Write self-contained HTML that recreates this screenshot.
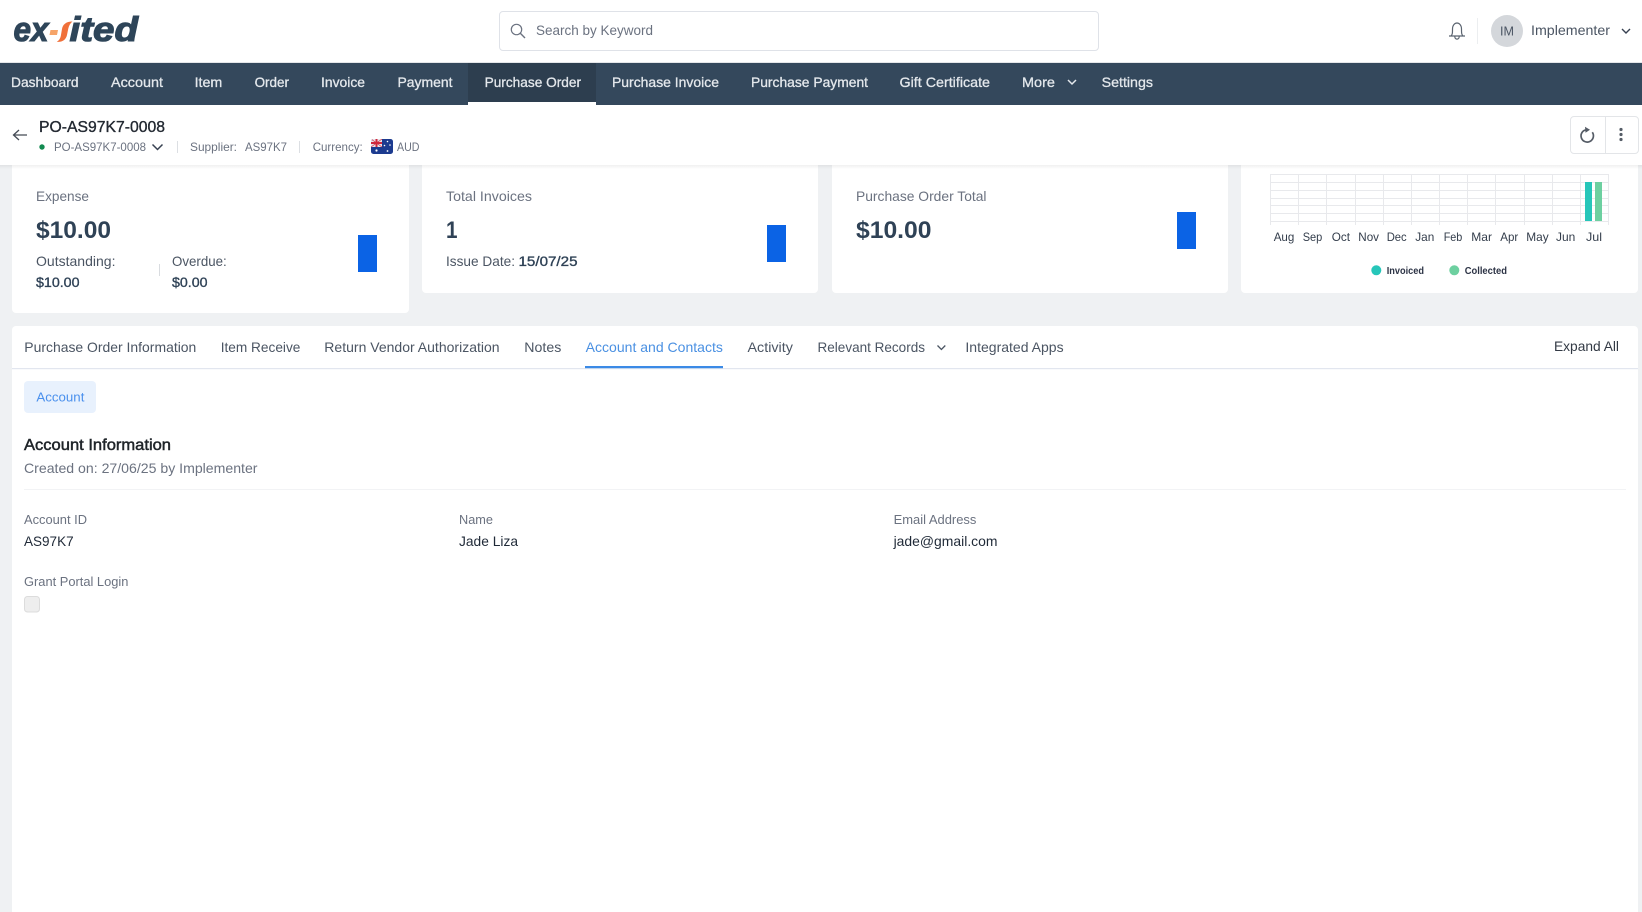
<!DOCTYPE html>
<html lang="en">
<head>
<meta charset="utf-8">
<title>PO-AS97K7-0008</title>
<style>
html,body{margin:0;padding:0;background:#eff1f3;width:1642px;height:912px;overflow:hidden}
svg{display:block}
text{font-family:"Liberation Sans",Arial,sans-serif;font-size:14px;fill:#4b5563}
.nav text{fill:#e4e8ec;stroke:#e4e8ec;stroke-width:.3;font-size:14px}
.sub text{font-size:12px;fill:#6b7280}
.lab text{font-size:14px;fill:#6b7280}
.m text{font-size:12px;fill:#333d4b}
.f text{font-size:13px;fill:#6b7280}
.v text{font-size:14px;fill:#1f2937}
.tab text{font-size:14px;fill:#4b5563}
.big{font-size:24px;font-weight:bold;fill:#2f4256}
</style>
</head>
<body>
<svg xmlns="http://www.w3.org/2000/svg" width="1642" height="912" viewBox="0 0 1642 912">
<rect width="1642" height="912" fill="#eff1f3"/>

<!-- cards -->
<rect x="12" y="150" width="397" height="163" rx="4" fill="#fff"/>
<rect x="422" y="150" width="396" height="143" rx="4" fill="#fff"/>
<rect x="832" y="150" width="396" height="143" rx="4" fill="#fff"/>
<rect x="1241" y="150" width="397" height="143" rx="4" fill="#fff"/>

<g class="lab">
<text x="36" y="201" textLength="53" lengthAdjust="spacingAndGlyphs">Expense</text>
<text x="446" y="201" textLength="86" lengthAdjust="spacingAndGlyphs">Total Invoices</text>
<text x="856" y="201" textLength="130.5" lengthAdjust="spacingAndGlyphs">Purchase Order Total</text>
</g>
<text class="big" x="36" y="238" textLength="75" lengthAdjust="spacingAndGlyphs">$10.00</text>
<text class="big" x="446" y="238" textLength="11.5" lengthAdjust="spacingAndGlyphs">1</text>
<text class="big" x="856" y="238" textLength="75.5" lengthAdjust="spacingAndGlyphs">$10.00</text>

<text x="36" y="266" textLength="79.5" lengthAdjust="spacingAndGlyphs">Outstanding:</text>
<text x="172" y="266" textLength="54.7" lengthAdjust="spacingAndGlyphs">Overdue:</text>
<text x="36" y="287" textLength="43.5" lengthAdjust="spacingAndGlyphs" style="fill:#2f4256;stroke:#2f4256;stroke-width:.35">$10.00</text>
<text x="172" y="287" textLength="35.5" lengthAdjust="spacingAndGlyphs" style="fill:#2f4256;stroke:#2f4256;stroke-width:.35">$0.00</text>
<rect x="159" y="264" width="1" height="12" fill="#d9dce0"/>
<text x="446" y="266" textLength="69" lengthAdjust="spacingAndGlyphs">Issue Date:</text>
<text x="518.5" y="266" textLength="59" lengthAdjust="spacingAndGlyphs" style="fill:#2f4256;stroke:#2f4256;stroke-width:.35">15/07/25</text>

<rect x="358" y="235" width="19" height="37" fill="#0b63e5"/>
<rect x="767" y="225" width="19" height="37" fill="#0b63e5"/>
<rect x="1177" y="212" width="19" height="37" fill="#0b63e5"/>

<!-- chart -->
<g stroke="#e8e9ec" stroke-width="1" fill="none">
<path d="M1270 174.5H1609M1270 182.5H1609M1270 190.5H1609M1270 198.5H1609M1270 205.5H1609M1270 213.5H1609M1270 221.5H1609"/>
<path d="M1270.5 174V225M1298.5 174V225M1326.5 174V225M1355.5 174V225M1383.5 174V225M1411.5 174V225M1439.5 174V225M1467.5 174V225M1495.5 174V225M1524.5 174V225M1552.5 174V225M1580.5 174V225M1608.5 174V225"/>
</g>
<rect x="1585" y="182" width="7" height="39" fill="#26c6b9"/>
<rect x="1595" y="182" width="7" height="39" fill="#6dd0a0"/>
<g class="m">
<text x="1273.7" y="241" textLength="20.6" lengthAdjust="spacingAndGlyphs">Aug</text>
<text x="1302.7" y="241" textLength="19.6" lengthAdjust="spacingAndGlyphs">Sep</text>
<text x="1331.7" y="241" textLength="18.3" lengthAdjust="spacingAndGlyphs">Oct</text>
<text x="1358.3" y="241" textLength="20.7" lengthAdjust="spacingAndGlyphs">Nov</text>
<text x="1386.7" y="241" textLength="20" lengthAdjust="spacingAndGlyphs">Dec</text>
<text x="1415.3" y="241" textLength="19" lengthAdjust="spacingAndGlyphs">Jan</text>
<text x="1443.7" y="241" textLength="18.6" lengthAdjust="spacingAndGlyphs">Feb</text>
<text x="1471.3" y="241" textLength="20.7" lengthAdjust="spacingAndGlyphs">Mar</text>
<text x="1500.3" y="241" textLength="18" lengthAdjust="spacingAndGlyphs">Apr</text>
<text x="1526.3" y="241" textLength="22.4" lengthAdjust="spacingAndGlyphs">May</text>
<text x="1556" y="241" textLength="19.3" lengthAdjust="spacingAndGlyphs">Jun</text>
<text x="1586" y="241" textLength="16" lengthAdjust="spacingAndGlyphs">Jul</text>
</g>
<circle cx="1376.3" cy="270.3" r="5" fill="#26c6b9"/>
<circle cx="1454.3" cy="270.3" r="5" fill="#6dd0a0"/>
<text x="1386.7" y="274" textLength="37.3" lengthAdjust="spacingAndGlyphs" style="font-size:10px;font-weight:bold;fill:#2c3345">Invoiced</text>
<text x="1464.7" y="274" textLength="42.3" lengthAdjust="spacingAndGlyphs" style="font-size:10px;font-weight:bold;fill:#2c3345">Collected</text>

<!-- header -->
<rect width="1642" height="63" fill="#fff"/>
<rect y="62" width="1642" height="1" fill="#e4e6e9"/>

<!-- logo -->
<text x="13.5" y="41" textLength="35" lengthAdjust="spacingAndGlyphs" style="font-size:34px;font-weight:bold;font-style:italic;fill:#2e4559;stroke:#2e4559;stroke-width:1.1">ex</text>
<text x="69.5" y="41" textLength="68.5" lengthAdjust="spacingAndGlyphs" style="font-size:34px;font-weight:bold;font-style:italic;fill:#2e4559;stroke:#2e4559;stroke-width:1.1">ited</text>
<path d="M50.5 30H58L57 35H49.5Z" fill="#f6a469"/>
<path d="M72.5 21.5C66 21.5 62.8 24.5 62 29L60.8 36C60.3 38.5 59 40.5 56.8 41.8C62.5 42.5 66 39.5 67 35L68.3 28.5C69 25.5 70.3 23.2 72.5 21.5Z" fill="#f0703a"/>

<!-- search -->
<rect x="499.5" y="11.5" width="599" height="39" rx="3.5" fill="#fff" stroke="#dfe2e8"/>
<circle cx="516.5" cy="29.5" r="5.2" fill="none" stroke="#6b7280" stroke-width="1.2"/>
<path d="M520.3 33.3L525 38" stroke="#6b7280" stroke-width="1.4" fill="none"/>
<text x="536" y="35" textLength="117" lengthAdjust="spacingAndGlyphs" style="fill:#6b7280">Search by Keyword</text>

<!-- bell -->
<path d="M1451 36C1452.5 34.5 1452.5 33 1452.5 29C1452.5 25.5 1454.5 23 1457 23C1459.5 23 1461.5 25.5 1461.5 29C1461.5 33 1461.5 34.5 1463 36ZM1449 36H1465M1454.8 36.5C1454.8 40 1459.2 40 1459.2 36.5" fill="none" stroke="#5b6470" stroke-width="1.2" stroke-linejoin="round"/>
<rect x="1477" y="18" width="1" height="26" fill="#eceef0"/>
<circle cx="1507" cy="31" r="16" fill="#d4d7db"/>
<text x="1500" y="35.5" textLength="14" lengthAdjust="spacingAndGlyphs" style="font-size:13px;fill:#4b5563">IM</text>
<text x="1531" y="35" textLength="79" lengthAdjust="spacingAndGlyphs" style="fill:#4b5563">Implementer</text>
<path d="M1622 29L1626 33L1630 29" fill="none" stroke="#374151" stroke-width="1.4"/>

<!-- nav -->
<rect y="63" width="1642" height="42" fill="#34485c"/>
<rect x="468" y="63" width="128" height="39" fill="#2d3e4f"/>
<rect x="468" y="102" width="128" height="3" fill="#fff"/>
<g class="nav">
<text x="11" y="87" textLength="67.5" lengthAdjust="spacingAndGlyphs">Dashboard</text>
<text x="111" y="87" textLength="52" lengthAdjust="spacingAndGlyphs">Account</text>
<text x="194.6" y="87" textLength="27.7" lengthAdjust="spacingAndGlyphs">Item</text>
<text x="254.6" y="87" textLength="34.4" lengthAdjust="spacingAndGlyphs">Order</text>
<text x="321" y="87" textLength="44" lengthAdjust="spacingAndGlyphs">Invoice</text>
<text x="397.5" y="87" textLength="55" lengthAdjust="spacingAndGlyphs">Payment</text>
<text x="484.6" y="87" textLength="96.4" lengthAdjust="spacingAndGlyphs">Purchase Order</text>
<text x="612" y="87" textLength="107" lengthAdjust="spacingAndGlyphs">Purchase Invoice</text>
<text x="751" y="87" textLength="117" lengthAdjust="spacingAndGlyphs">Purchase Payment</text>
<text x="899.5" y="87" textLength="90.5" lengthAdjust="spacingAndGlyphs">Gift Certificate</text>
<text x="1022" y="87" textLength="33" lengthAdjust="spacingAndGlyphs">More</text>
<text x="1101.6" y="87" textLength="51.4" lengthAdjust="spacingAndGlyphs">Settings</text>
</g>
<path d="M1068 80L1072 84L1076 80" fill="none" stroke="#e4e8ec" stroke-width="1.5"/>

<!-- sub header -->
<rect y="105" width="1642" height="60" fill="#fff"/>
<defs>
<linearGradient id="sh" x1="0" y1="0" x2="0" y2="1"><stop offset="0" stop-color="#000" stop-opacity=".06"/><stop offset="1" stop-color="#000" stop-opacity="0"/></linearGradient>
<clipPath id="flag"><rect x="371" y="139" width="22" height="15" rx="2.5"/></clipPath>
</defs>
<rect y="165" width="1642" height="4" fill="url(#sh)"/>
<path d="M27 135H14M19 130L13.5 135L19 140" fill="none" stroke="#444b55" stroke-width="1.3"/>
<text x="39" y="132" textLength="126" lengthAdjust="spacingAndGlyphs" style="font-size:16px;fill:#222831;stroke:#222831;stroke-width:.35">PO-AS97K7-0008</text>
<circle cx="42" cy="147" r="2.7" fill="#128a50"/>
<g class="sub">
<text x="54" y="151" textLength="92" lengthAdjust="spacingAndGlyphs">PO-AS97K7-0008</text>
<text x="190" y="151" textLength="47" lengthAdjust="spacingAndGlyphs">Supplier:</text>
<text x="245" y="151" textLength="42" lengthAdjust="spacingAndGlyphs">AS97K7</text>
<text x="312.7" y="151" textLength="50" lengthAdjust="spacingAndGlyphs">Currency:</text>
<text x="397" y="151" textLength="22.5" lengthAdjust="spacingAndGlyphs">AUD</text>
</g>
<path d="M152.5 144.5L157.5 149.5L162.5 144.5" fill="none" stroke="#374151" stroke-width="1.5"/>
<rect x="177" y="141" width="1" height="12" fill="#dcdfe3"/>
<rect x="299" y="141" width="1" height="12" fill="#dcdfe3"/>
<g clip-path="url(#flag)">
<rect x="371" y="139" width="22" height="15" fill="#1c3b8f"/>
<rect x="371" y="139" width="11" height="8" fill="#e8e3ea"/>
<rect x="371" y="142" width="11" height="2" fill="#d0283c"/>
<rect x="375.5" y="139" width="2" height="8" fill="#d0283c"/>
<path d="M371 139L382 147M382 139L371 147" stroke="#d0283c" stroke-width=".7"/>
<g fill="#fff"><circle cx="376.5" cy="150.5" r="1.1"/><circle cx="387.5" cy="141.5" r=".8"/><circle cx="384.5" cy="145.5" r=".8"/><circle cx="390" cy="145" r=".8"/><circle cx="387.5" cy="151" r=".9"/></g>
</g>

<!-- action buttons -->
<rect x="1570.5" y="116.5" width="68" height="37" rx="3.5" fill="#fff" stroke="#e3e5e8"/>
<rect x="1605" y="117" width="1" height="36" fill="#e3e5e8"/>
<path d="M1586 129.8A6.2 6.2 0 1 0 1592.3 132.3" fill="none" stroke="#555c66" stroke-width="1.7"/>
<path d="M1585 126.8L1590 129.8L1585.5 132.8Z" fill="#555c66"/>
<circle cx="1621" cy="129.5" r="1.6" fill="#555c66"/>
<circle cx="1621" cy="134.5" r="1.6" fill="#555c66"/>
<circle cx="1621" cy="139.5" r="1.6" fill="#555c66"/>

<!-- main panel -->
<rect x="12" y="326" width="1626" height="600" rx="4" fill="#fff"/>
<rect x="12" y="368" width="1626" height="1.2" fill="#e2e6ef"/>
<rect x="585" y="366" width="138" height="2.2" fill="#3b8ae6"/>
<g class="tab">
<text x="24.3" y="352" textLength="172" lengthAdjust="spacingAndGlyphs">Purchase Order Information</text>
<text x="220.7" y="352" textLength="79.7" lengthAdjust="spacingAndGlyphs">Item Receive</text>
<text x="324.3" y="352" textLength="175.3" lengthAdjust="spacingAndGlyphs">Return Vendor Authorization</text>
<text x="524.3" y="352" textLength="37" lengthAdjust="spacingAndGlyphs">Notes</text>
<text x="585.7" y="352" textLength="137.2" lengthAdjust="spacingAndGlyphs" style="fill:#4a90e2">Account and Contacts</text>
<text x="747.5" y="352" textLength="45.4" lengthAdjust="spacingAndGlyphs">Activity</text>
<text x="817.5" y="352" textLength="107.5" lengthAdjust="spacingAndGlyphs">Relevant Records</text>
<text x="965.4" y="352" textLength="98.2" lengthAdjust="spacingAndGlyphs">Integrated Apps</text>
<text x="1554" y="351" textLength="65" lengthAdjust="spacingAndGlyphs" style="fill:#333a45">Expand All</text>
</g>
<path d="M937.5 345.5L941.4 349.5L945.3 345.5" fill="none" stroke="#4b5563" stroke-width="1.3"/>

<rect x="24" y="381" width="72" height="32" rx="4" fill="#e8f1fd"/>
<text x="36.4" y="401.5" textLength="48" lengthAdjust="spacingAndGlyphs" style="font-size:13px;fill:#4a90ed">Account</text>

<text x="24" y="450" textLength="147" lengthAdjust="spacingAndGlyphs" style="font-size:16px;fill:#1f2429;stroke:#1f2429;stroke-width:.5">Account Information</text>
<text x="24" y="473" textLength="233.5" lengthAdjust="spacingAndGlyphs" style="fill:#6b7280">Created on: 27/06/25 by Implementer</text>
<rect x="24" y="489" width="1602" height="1" fill="#f2f3f5"/>

<g class="f">
<text x="24" y="524" textLength="63" lengthAdjust="spacingAndGlyphs">Account ID</text>
<text x="459" y="524" textLength="34" lengthAdjust="spacingAndGlyphs">Name</text>
<text x="893.6" y="524" textLength="82.8" lengthAdjust="spacingAndGlyphs">Email Address</text>
<text x="24" y="586" textLength="104.4" lengthAdjust="spacingAndGlyphs">Grant Portal Login</text>
</g>
<g class="v">
<text x="24" y="546" textLength="49.6" lengthAdjust="spacingAndGlyphs">AS97K7</text>
<text x="459" y="546" textLength="59" lengthAdjust="spacingAndGlyphs">Jade Liza</text>
<text x="893.6" y="546" textLength="103.9" lengthAdjust="spacingAndGlyphs">jade@gmail.com</text>
</g>
<rect x="24.5" y="596.5" width="15" height="15.5" rx="3" fill="#eeeeee" stroke="#dcdcdc"/>
</svg>
</body>
</html>
